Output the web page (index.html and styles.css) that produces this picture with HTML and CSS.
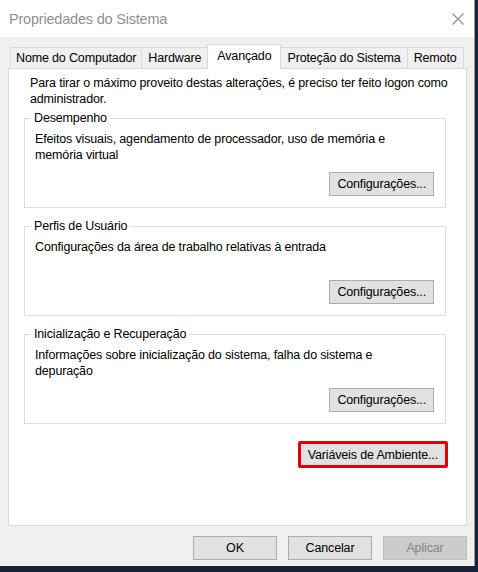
FILE: index.html
```html
<!DOCTYPE html>
<html lang="pt-BR">
<head>
    <meta charset="UTF-8">
    <meta name="viewport" content="width=device-width, initial-scale=1.0">
    <title>Propriedades do Sistema</title>
    <link rel="stylesheet" href="styles.css">
</head>
<body>

    <div class="window">
        <div class="titlebar">
            <span class="title">Propriedades do Sistema</span>
            <svg class="close" width="12" height="12" viewBox="0 0 12 12">
                <path d="M0.5 0.5 L11.5 11.5 M11.5 0.5 L0.5 11.5" stroke="#8c8c8c" stroke-width="1.1" fill="none"/>
            </svg>
        </div>

        <div class="main">
            <div class="tabs">
                <div class="tab">Nome do Computador</div>
                <div class="tab">Hardware</div>
                <div class="tab active">Avançado</div>
                <div class="tab">Proteção do Sistema</div>
                <div class="tab">Remoto</div>
            </div>

            <div class="panel">
                <p class="intro">Para tirar o máximo proveito destas alterações, é preciso ter feito logon como administrador.</p>

                <fieldset class="group">
                    <legend>Desempenho</legend>
                    <p class="desc">Efeitos visuais, agendamento de processador, uso de memória e memória virtual</p>
                    <div class="row"><button class="btn">Configurações...</button></div>
                </fieldset>

                <fieldset class="group">
                    <legend>Perfis de Usuário</legend>
                    <p class="desc">Configurações da área de trabalho relativas à entrada</p>
                    <div class="row"><button class="btn">Configurações...</button></div>
                </fieldset>

                <fieldset class="group">
                    <legend>Inicialização e Recuperação</legend>
                    <p class="desc">Informações sobre inicialização do sistema, falha do sistema e depuração</p>
                    <div class="row"><button class="btn">Configurações...</button></div>
                </fieldset>

                <div class="row env-row"><button class="btn env">Variáveis de Ambiente...</button></div>
            </div>

            <div class="footer">
                <button class="btn wide">OK</button>
                <button class="btn wide">Cancelar</button>
                <button class="btn wide" disabled>Aplicar</button>
            </div>
        </div>
    </div>

</body>
</html>
```

FILE: styles.css
```css
body {
    margin: 0;
    background-color: #15233a;
    font-family: "Liberation Sans", Arial, sans-serif;
    font-size: 12.5px;
    letter-spacing: -0.15px;
    color: #000;
}

.window {
    width: 474px;
    height: 566px;
    background-color: #f0f0f0;
    border-right: 1px solid #9a9a9a;
    display: flex;
    flex-direction: column;
}

.titlebar {
    height: 37px;
    background-color: #fff;
    display: flex;
    align-items: center;
    justify-content: space-between;
    padding: 0 10px 0 9px;
    flex-shrink: 0;
}

.title {
    font-size: 14.5px;
    letter-spacing: -0.2px;
    color: #8f8f8f;
}

.main {
    padding: 7px 7px 0 8px;
    display: flex;
    flex-direction: column;
}

.tabs {
    display: flex;
    align-items: flex-end;
    height: 24px;
    padding-left: 2px;
}

.tab {
    height: 21px;
    line-height: 20px;
    padding: 0 6px;
    border: 1px solid #d9d9d9;
    border-bottom: none;
    margin-right: -1px;
    background-color: #f0f0f0;
    box-sizing: border-box;
    white-space: nowrap;
    flex-shrink: 0;
}

.tab:first-child {
    padding: 0 5px;
}

.tab.active {
    height: 25px;
    line-height: 22px;
    padding: 0 9px;
    background-color: #fff;
    margin-bottom: -1px;
    position: relative;
    z-index: 1;
}

.panel {
    background-color: #fff;
    border: 1px solid #d9d9d9;
    box-sizing: border-box;
    height: 458px;
    padding: 7px 20px 0 15px;
    display: flex;
    flex-direction: column;
}

.intro {
    margin: 0 -8px 3px 6px;
    line-height: 15.5px;
}

.group {
    border: 1px solid #dcdcdc;
    margin: 0 0 10px 0;
    padding: 0 11px 11px 10px;
}

.group legend {
    padding: 0 3px;
    margin-left: -4px;
    line-height: 16px;
}

.desc {
    margin: 5px 0 0;
    line-height: 16px;
    min-height: 32px;
    max-width: 370px;
}

.row {
    display: flex;
    justify-content: flex-end;
    margin-top: 9px;
}

.btn {
    font-family: inherit;
    font-size: 12.5px;
    letter-spacing: -0.15px;
    color: #000;
    background-color: #e1e1e1;
    border: 1px solid #adadad;
    height: 24px;
    padding: 0 7px;
    margin: 0;
}

.btn:disabled {
    background-color: #cccccc;
    border-color: #bfbfbf;
    color: #838383;
}

.env-row {
    margin-top: 7px;
    margin-right: -2px;
}

.env {
    border: 3px solid #e0000b;
    border-radius: 2px;
    height: 27px;
    padding: 0 7px;
}

.footer {
    display: flex;
    justify-content: flex-end;
    gap: 11px;
    margin-top: 10px;
}

.btn.wide {
    width: 84px;
}
```
